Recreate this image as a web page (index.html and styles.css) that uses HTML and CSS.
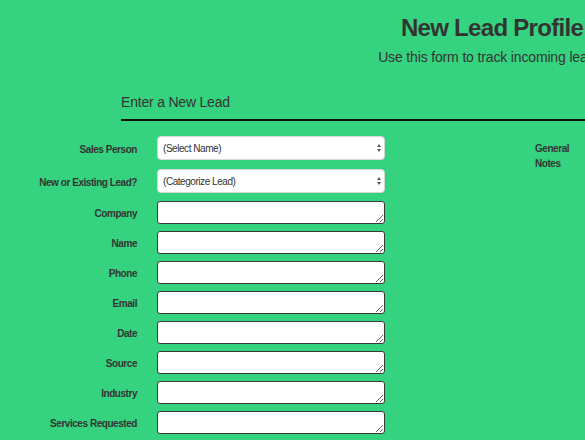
FILE: index.html
```html
<!DOCTYPE html>
<html lang="en">
<head>
<meta charset="utf-8">
<title>New Lead Profile</title>
<link rel="stylesheet" href="styles.css">
</head>
<body>
<header class="page-head">
  <h1 class="title">New Lead Profile</h1>
  <p class="subtitle">Use this form to track incoming leads.</p>
</header>
<section class="lead-section">
  <h2 class="section-title">Enter a New Lead</h2>
  <div class="lead-form">
    <div class="fields">
      <div class="row row-select">
        <label class="lbl">Sales Person</label>
        <div class="select-wrap"><select class="sel"><option>(Select Name)</option></select></div>
      </div>
      <div class="row row-select">
        <label class="lbl">New or Existing Lead?</label>
        <div class="select-wrap"><select class="sel"><option>(Categorize Lead)</option></select></div>
      </div>
      <div class="row"><label class="lbl">Company</label><textarea class="txt"></textarea></div>
      <div class="row"><label class="lbl">Name</label><textarea class="txt"></textarea></div>
      <div class="row"><label class="lbl">Phone</label><textarea class="txt"></textarea></div>
      <div class="row"><label class="lbl">Email</label><textarea class="txt"></textarea></div>
      <div class="row"><label class="lbl">Date</label><textarea class="txt"></textarea></div>
      <div class="row"><label class="lbl">Source</label><textarea class="txt"></textarea></div>
      <div class="row"><label class="lbl">Industry</label><textarea class="txt"></textarea></div>
      <div class="row"><label class="lbl">Services Requested</label><textarea class="txt"></textarea></div>
    </div>
    <div class="notes">
      <label class="lbl notes-lbl">General<br>Notes</label>
    </div>
  </div>
</section>
</body>
</html>
```

FILE: styles.css
```css
html, body {
  margin: 0;
  padding: 0;
}
body {
  background: #35d37f;
  color: #333;
  font-family: "Liberation Sans", Arial, sans-serif;
  width: 585px;
  height: 440px;
  overflow: hidden;
}
.page-head {
  width: 984px;
  text-align: center;
  white-space: nowrap;
}
.title {
  margin: 12px 0 0;
  font-size: 24px;
  line-height: 32px;
  font-weight: 700;
  letter-spacing: -0.7px;
  color: #333;
}
.subtitle {
  margin: 3px 0 0;
  font-size: 14px;
  line-height: 20px;
  letter-spacing: -0.15px;
  color: #333;
}
.lead-section {
  margin-top: 25px;
}
.section-title {
  margin: 0 0 0 121px;
  padding-bottom: 7px;
  font-size: 14px;
  line-height: 20px;
  font-weight: 400;
  letter-spacing: -0.2px;
  color: #333;
  border-bottom: 2px solid #111;
}
.lead-form {
  display: flex;
  margin-top: 15px;
}
.fields {
  display: flex;
  flex-direction: column;
  gap: 7px;
  width: 385px;
}
.row {
  display: grid;
  grid-template-columns: 137px 228px;
  column-gap: 20px;
  align-items: center;
}
.row-select {
  margin-bottom: 2px;
}
.row-select + .row-select {
  margin-bottom: 1px;
}
.lbl {
  text-align: right;
  font-size: 10px;
  font-weight: 700;
  letter-spacing: -0.45px;
  color: #333;
  padding-top: 2px;
}
.select-wrap {
  position: relative;
}
.select-wrap::before,
.select-wrap::after {
  content: "";
  position: absolute;
  right: 4px;
  width: 0;
  height: 0;
  border-left: 2px solid transparent;
  border-right: 2px solid transparent;
}
.select-wrap::before {
  top: 8px;
  border-bottom: 3px solid #555;
}
.select-wrap::after {
  top: 13px;
  border-top: 3px solid #555;
}
.sel {
  -webkit-appearance: none;
  appearance: none;
  display: block;
  box-sizing: border-box;
  width: 100%;
  height: 24px;
  margin: 0;
  padding: 0 5px;
  border: 1px solid #d6d6d6;
  border-radius: 4px;
  background: #fff;
  color: #333;
  font-family: inherit;
  font-size: 10px;
  letter-spacing: -0.45px;
}
.txt {
  display: block;
  box-sizing: border-box;
  width: 100%;
  height: 23px;
  margin: 0;
  padding: 2px;
  border: 1px solid #3a3a3a;
  border-radius: 3px;
  background: #fff;
  font-family: inherit;
}
.notes {
  margin-left: 150px;
}
.notes-lbl {
  display: block;
  text-align: left;
  line-height: 15px;
  padding-top: 5px;
}
```
